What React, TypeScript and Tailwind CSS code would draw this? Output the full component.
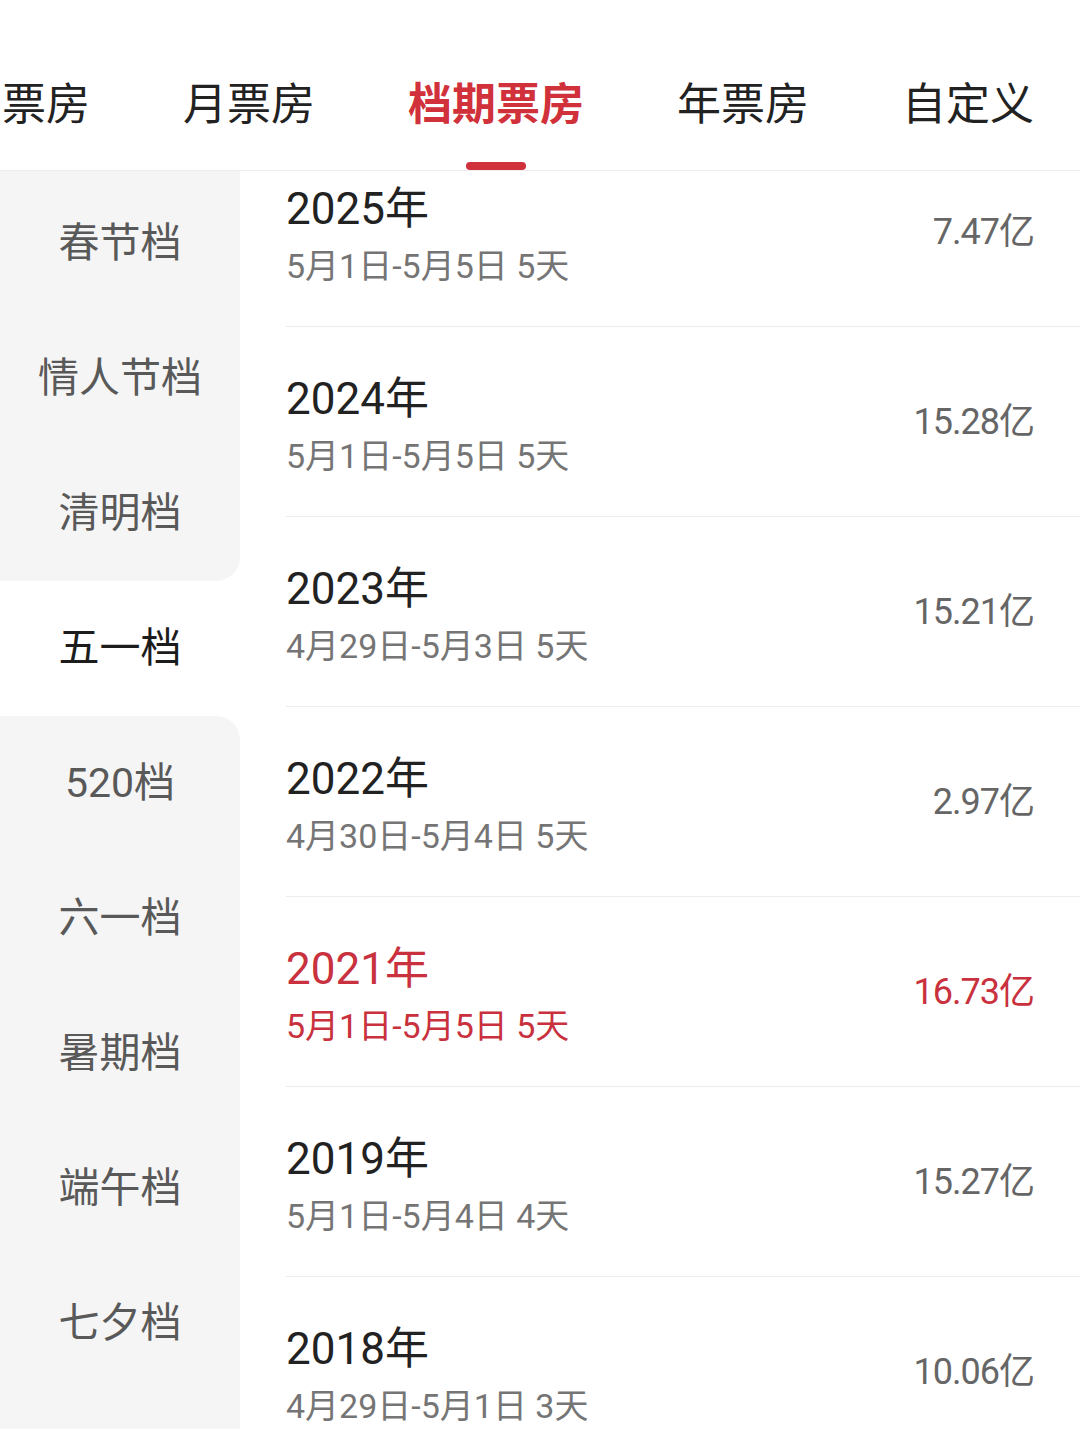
import React from "react";

const font = { fontFamily: '"Roboto", "Noto Sans CJK SC", sans-serif' };

// first tab is scrolled partly out of view, only "票房" shows
const tabs = ["票房", "月票房", "档期票房", "年票房", "自定义"];
const activeTab = 2;

const seasons = ["春节档", "情人节档", "清明档", "五一档", "520档", "六一档", "暑期档", "端午档", "七夕档"];
const activeSeason = 3;

interface Row {
  year: string;
  range: string;
  total: string;
  highlight?: boolean;
}

const rows: Row[] = [
  { year: "2025年", range: "5月1日-5月5日 5天", total: "7.47亿" },
  { year: "2024年", range: "5月1日-5月5日 5天", total: "15.28亿" },
  { year: "2023年", range: "4月29日-5月3日 5天", total: "15.21亿" },
  { year: "2022年", range: "4月30日-5月4日 5天", total: "2.97亿" },
  { year: "2021年", range: "5月1日-5月5日 5天", total: "16.73亿", highlight: true },
  { year: "2019年", range: "5月1日-5月4日 4天", total: "15.27亿" },
  { year: "2018年", range: "4月29日-5月1日 3天", total: "10.06亿" },
];

const TabBar: React.FC = () => (
  <div className="h-[171px] shrink-0 border-b border-[#ededed] overflow-hidden bg-white">
    <div className="flex gap-[93px] ml-[2px] pt-[75px]">
      {tabs.map((t, i) => (
        <div key={t} className="relative shrink-0">
          <span
            className={
              i === activeTab
                ? "block text-[44px] leading-[60px] font-bold text-[#d0313b]"
                : "block text-[44px] leading-[60px] text-[#222]"
            }
          >
            {t}
          </span>
          {i === activeTab && (
            <div className="absolute left-1/2 -translate-x-1/2 top-[87px] w-[60px] h-[8px] rounded-full bg-[#d0313b]" />
          )}
        </div>
      ))}
    </div>
  </div>
);

const Sidebar: React.FC = () => (
  <div className="w-[240px] shrink-0 bg-white flex flex-col">
    <div className="h-[5px] shrink-0 bg-[#f5f5f5]" />
    {seasons.map((s, i) => {
      let cls = "h-[135px] shrink-0 flex items-center justify-center text-[41px] ";
      if (i === activeSeason) cls += "bg-white text-[#1c1c1c]";
      else if (i === activeSeason - 1) cls += "bg-[#f5f5f5] text-[#595959] rounded-br-[24px]";
      else if (i === activeSeason + 1) cls += "bg-[#f5f5f5] text-[#595959] rounded-tr-[24px]";
      else cls += "bg-[#f5f5f5] text-[#595959]";
      return (
        <div key={s} className={cls}>
          {s}
        </div>
      );
    })}
    <div className="flex-1 bg-[#f5f5f5]" />
  </div>
);

const ListRow: React.FC<{ row: Row }> = ({ row }) => (
  <div className="ml-[46px] h-[190px] border-b border-[#ececec] flex justify-between pr-[46px]">
    <div className="pt-[44px]">
      <div className={`text-[44px] leading-[56px] ${row.highlight ? "text-[#c8313d]" : "text-[#222]"}`}>
        {row.year}
      </div>
      <div
        className={`mt-[5px] text-[34px] leading-[48px] ${
          row.highlight ? "text-[#c8313d]" : "text-[#757575]"
        }`}
      >
        {row.range}
      </div>
    </div>
    <div
      className={`self-center text-[36px] leading-[48px] tracking-[-1px] ${
        row.highlight ? "text-[#c8313d]" : "text-[#666]"
      }`}
    >
      {row.total}
    </div>
  </div>
);

export default function App() {
  return (
    <div className="w-[1080px] h-[1429px] overflow-hidden bg-white flex flex-col" style={font}>
      <TabBar />
      <div className="flex flex-1 overflow-hidden">
        <Sidebar />
        <div className="flex-1 overflow-hidden">
          <div className="mt-[-34px]">
            {rows.map((r) => (
              <ListRow key={r.year} row={r} />
            ))}
          </div>
        </div>
      </div>
    </div>
  );
}
